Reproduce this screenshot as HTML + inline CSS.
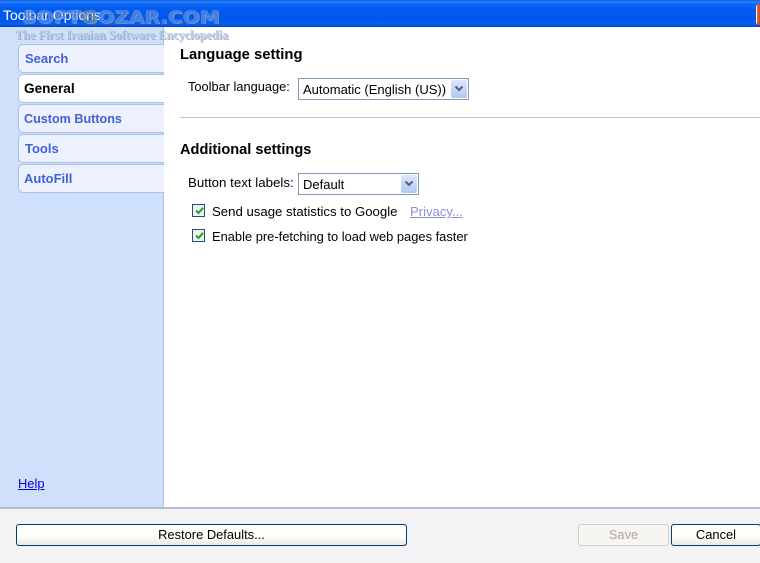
<!DOCTYPE html>
<html><head><meta charset="utf-8"><style>
html,body{margin:0;padding:0;background:#fff}
body{width:760px;height:563px;position:relative;overflow:hidden;font-family:"Liberation Sans",Arial,sans-serif;font-size:12px;color:#000}
div,span,a{position:absolute;white-space:nowrap;box-sizing:border-box}
.title{left:0;top:0;width:760px;height:27px;background:linear-gradient(#0a5ae8 0,#2e83fb 2px,#0a68f6 4px,#0058ee 10px,#0057ea 22px,#0a62f0 24px,#0043c8 27px)}
.side{left:0;top:27px;width:164px;height:480px;background:#cfe0fa;border-right:1px solid #a9bfdf}
.tab{left:18px;width:146px;height:29px;background:#edf0fd;border:1px solid #a8c2e8;border-right:0;border-radius:5px 0 0 5px;color:#3f62d9;font-weight:bold;font-size:13px;line-height:28px;padding-left:6px}
.tab.on{background:#fff;color:#000;width:146px;z-index:2;border-color:#a8c2e8}
.h{font-weight:bold;font-size:14.8px;left:180px;color:#000}
.l{font-size:12.9px;color:#000}
.sel{background:#fff;border:1px solid #7f9db9;height:22px;font-size:13px;line-height:22px;padding-left:4px}
.arrow{top:1px;right:1px;width:16px;height:18px;background:linear-gradient(#dce7fc,#b4c8f4);border-radius:2px}
.arrow svg{position:absolute;left:3px;top:5px}
.cb{left:192px;width:13px;height:13px;border:1px solid #1c5180;background:#f3f3ee}
.cb svg{position:absolute;left:1px;top:0}
.foot{left:0;top:507px;width:760px;height:56px;background:#f3f2f5;border-top:2px solid #b4bcd6}
.btn{top:524px;height:22px;border:1px solid #003c74;border-radius:3px;background:linear-gradient(#fff 0,#fdfdfb 60%,#ece8e0 100%);text-align:center;font-size:12.9px;line-height:19px;color:#000}
.wm{color:#7f9fd6;opacity:.75;text-shadow:0 0 1px #fff,1px 1px 0 #6f8dbe;font-family:"Liberation Serif",serif}
</style></head><body>
<div class="title"></div>
<div style="left:756px;top:4px;width:4px;height:21px;background:linear-gradient(90deg,#fff 0,#fff 20%,#e8683a 30%,#d9441c);border-radius:3px 0 0 3px"></div>
<div style="left:3px;top:7px;color:#fff;font-size:14px;line-height:16px">Toolbar Options</div>
<div class="side"></div>
<div class="tab" style="top:44px">Search</div>
<div class="tab on" style="top:74px;padding-left:5px;font-size:13.6px">General</div>
<div class="tab" style="top:104px;padding-left:5px;font-size:12.6px">Custom Buttons</div>
<div class="tab" style="top:134px">Tools</div>
<div class="tab" style="top:164px;padding-left:5px">AutoFill</div>
<div class="wm" style="left:22px;top:9px;font-size:17px;font-weight:bold;color:#5a8be0;font-family:'DejaVu Sans',sans-serif;line-height:18px;z-index:5;transform:scaleX(1.18);transform-origin:0 50%">SOFT<span style="position:static;color:#7a8a90">G</span>OZAR.COM</div>
<div class="wm" style="left:15px;top:28px;font-size:12.2px;font-weight:bold;line-height:15px;color:#a9bbdc;z-index:5">The First Iranian Software Encyclopedia</div>
<div class="h" style="top:47px">Language setting</div>
<div class="l" style="left:188px;top:79px;font-size:12.8px">Toolbar language:</div>
<div class="sel" style="left:298px;top:78px;width:171px">Automatic (English (US))<span class="arrow"><svg width="10" height="8" viewBox="0 0 10 8"><path d="M1.5 1.5 5 5l3.5-3.5" fill="none" stroke="#4d6185" stroke-width="2"/></svg></span></div>
<div style="left:180px;top:117px;width:580px;height:1px;background:#c4c4c4"></div>
<div class="h" style="top:142px;font-size:14.6px">Additional settings</div>
<div class="l" style="left:188px;top:175px;font-size:13.3px">Button text labels:</div>
<div class="sel" style="left:298px;top:173px;width:121px">Default<span class="arrow"><svg width="10" height="8" viewBox="0 0 10 8"><path d="M1.5 1.5 5 5l3.5-3.5" fill="none" stroke="#4d6185" stroke-width="2"/></svg></span></div>
<div class="cb" style="top:204px"><svg width="11" height="11" viewBox="0 0 11 11"><path d="M2 5.5 4.5 8 9 2.8" fill="none" stroke="#21a121" stroke-width="2"/></svg></div>
<div class="l" style="left:212px;top:204px;font-size:13.2px">Send usage statistics to Google</div>
<a class="l" style="left:410px;top:204px;color:#8f8fd8;text-decoration:underline;font-size:13.1px">Privacy...</a>
<div class="cb" style="top:229px"><svg width="11" height="11" viewBox="0 0 11 11"><path d="M2 5.5 4.5 8 9 2.8" fill="none" stroke="#21a121" stroke-width="2"/></svg></div>
<div class="l" style="left:212px;top:229px">Enable pre-fetching to load web pages faster</div>
<a class="l" style="left:18px;top:476px;color:#0000e0;text-decoration:underline">Help</a>
<div class="foot"></div>
<div class="btn" style="left:16px;width:390px;border-right:0;box-shadow:1px 0 0 #003c74">Restore Defaults...</div>
<div class="btn" style="left:578px;width:91px;border-color:#d3cfc4;color:#aca899;background:#f7f5f1;font-weight:400">Save</div>
<div class="btn" style="left:671px;width:90px;border-right:1px solid #003c74">Cancel</div>
</body></html>
